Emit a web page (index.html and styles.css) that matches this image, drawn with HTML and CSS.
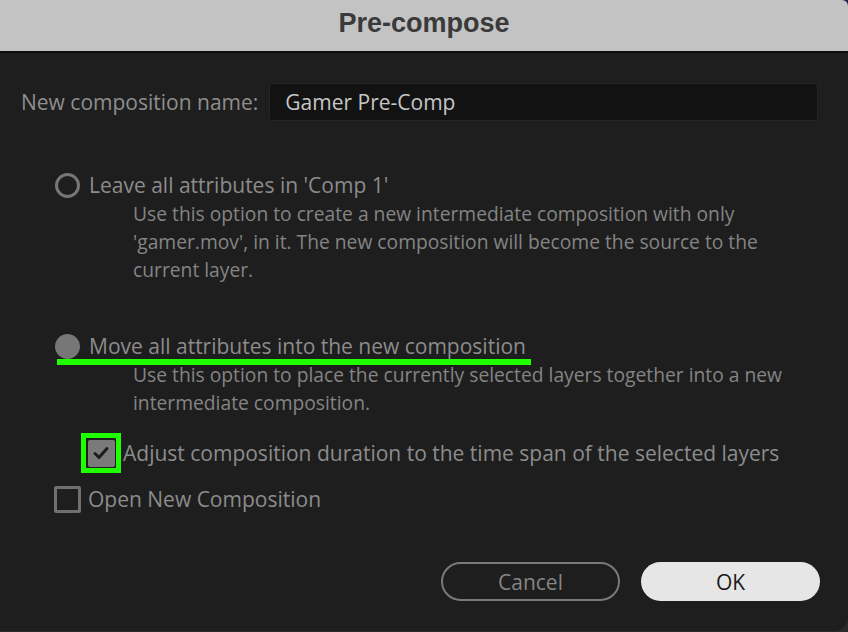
FILE: index.html
```html
<!DOCTYPE html>
<html lang="en">
<head>
    <meta charset="UTF-8">
    <title>Pre-compose</title>
    <link rel="stylesheet" href="styles.css">
</head>
<body>
    <div class="dialog">
        <div class="titlebar">Pre-compose</div>
        <div class="content">
            <div class="name-row">
                <label class="name-label">New composition name:</label>
                <div class="name-input">Gamer Pre-Comp</div>
            </div>

            <div class="option first">
                <div class="option-head">
                    <span class="radio"></span>
                    <span class="option-title">Leave all attributes in 'Comp 1'</span>
                </div>
                <p class="desc">Use this option to create a new intermediate composition with only<br>'gamer.mov', in it. The new composition will become the source to the<br>current layer.</p>
            </div>

            <div class="option second">
                <div class="option-head">
                    <span class="radio checked"></span>
                    <span class="option-title">Move all attributes into the new composition</span>
                    <span class="highlight-line"></span>
                </div>
                <p class="desc">Use this option to place the currently selected layers together into a new<br>intermediate composition.</p>
            </div>

            <div class="check-row indent">
                <span class="check-frame">
                    <span class="checkbox checked">
                        <svg width="20" height="20" viewBox="0 0 20 20"><path d="M4 10.5 L8 14.5 L16 5.5" fill="none" stroke="#1c1c1c" stroke-width="3" stroke-linecap="round" stroke-linejoin="round"/></svg>
                    </span>
                </span>
                <span class="check-label">Adjust composition duration to the time span of the selected layers</span>
            </div>

            <div class="check-row open">
                <span class="checkbox"></span>
                <span class="check-label">Open New Composition</span>
            </div>

            <div class="buttons">
                <button class="btn cancel">Cancel</button>
                <button class="btn ok">OK</button>
            </div>
        </div>
    </div>
</body>
</html>
```

FILE: styles.css
```css
* {
    margin: 0;
    padding: 0;
    box-sizing: border-box;
}

html, body {
    width: 848px;
    height: 632px;
    overflow: hidden;
}

body {
    background: linear-gradient(#3a1d4a 0, #3a1d4a 40px, #2a2a2a 41px);
    font-family: "Open Sans", "Noto Sans", sans-serif;
    color: #8c8c8c;
}

.dialog {
    width: 848px;
    height: 631px;
    background: #1e1e1e;
    border-top-right-radius: 6px;
    border-bottom-right-radius: 14px;
    overflow: hidden;
    display: flex;
    flex-direction: column;
}

.titlebar {
    height: 53px;
    background: #c3c3c3;
    border-bottom: 2px solid #0e0e0e;
    color: #3a3a3a;
    font-family: "Liberation Sans", Arial, sans-serif;
    font-weight: bold;
    font-size: 27px;
    text-align: center;
    line-height: 46px;
}

.content {
    flex: 1;
    padding: 30px 28px 0 21px;
    display: flex;
    flex-direction: column;
}

.name-row {
    display: flex;
    align-items: center;
    gap: 11px;
}

.name-label {
    font-size: 21px;
    color: #8e8e8e;
}

.name-input {
    width: 549px;
    height: 38px;
    background: #121212;
    border: 1px solid #262626;
    border-radius: 3px;
    padding-left: 15px;
    font-size: 21px;
    line-height: 36px;
    color: #c6c6c6;
}

.option {
    margin-left: 34px;
}

.option.first {
    margin-top: 50px;
}

.option.second {
    margin-top: 48px;
}

.option-head {
    position: relative;
    display: flex;
    align-items: center;
    gap: 9px;
    height: 28px;
}

.radio {
    width: 25px;
    height: 25px;
    border-radius: 50%;
    border: 3px solid #777;
}

.radio.checked {
    background: #777;
}

.option-title {
    font-size: 21px;
    color: #8c8c8c;
}

.highlight-line {
    position: absolute;
    left: 2px;
    top: 27px;
    width: 474px;
    height: 6px;
    background: #1eff00;
}

.desc {
    margin-left: 78px;
    margin-top: 1px;
    font-size: 19.25px;
    line-height: 28px;
    color: #848484;
}

.check-row {
    display: flex;
    align-items: center;
    gap: 2px;
}

.check-row.indent {
    margin-top: 16px;
    margin-left: 60px;
}

.check-row.open {
    margin-top: 12px;
    margin-left: 33px;
    gap: 7px;
}

.check-frame {
    width: 40px;
    height: 40px;
    border: 5px solid #1eff00;
    display: flex;
    align-items: center;
    justify-content: center;
}

.checkbox {
    width: 27px;
    height: 27px;
    border: 3px solid #707070;
    border-radius: 2px;
    display: flex;
    align-items: center;
    justify-content: center;
}

.checkbox.checked {
    background: #7a7a7a;
    border-color: #7a7a7a;
}

.check-label {
    font-size: 21px;
    color: #8c8c8c;
}

.buttons {
    margin-top: auto;
    margin-bottom: 30px;
    display: flex;
    justify-content: flex-end;
    gap: 21px;
}

.btn {
    width: 179px;
    height: 39px;
    border-radius: 20px;
    font-family: "Open Sans", "Noto Sans", sans-serif;
    font-size: 21px;
}

.cancel {
    background: transparent;
    border: 2px solid #7a7a7a;
    color: #858585;
}

.ok {
    background: #e6e6e6;
    border: none;
    color: #1a1a1a;
}
```
